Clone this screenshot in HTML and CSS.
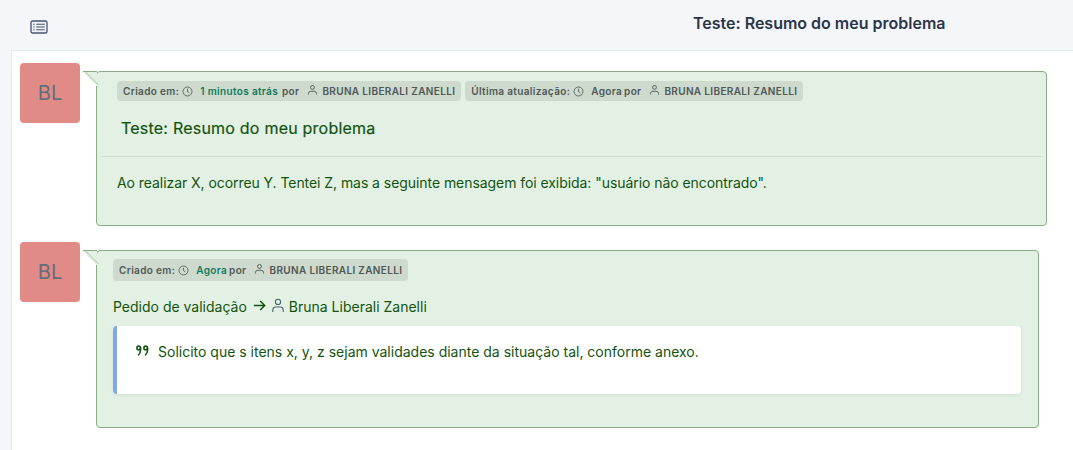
FILE: index.html
```html
<!DOCTYPE html>
<html lang="pt-BR">
<head>
<meta charset="utf-8">
<title>Teste: Resumo do meu problema</title>
<link rel="stylesheet" href="styles.css">
</head>
<body>
<header class="topbar">
  <button class="menu-btn" aria-label="Menu">
    <svg width="18" height="14" viewBox="0 0 18 14" fill="none" stroke="#47556e" stroke-width="1.1"><rect x="1" y="1" width="16" height="12" rx="1.6" fill="#eef1f7" stroke-width="1.3"/><path d="M3.2 4.2h1.4M3.2 7h1.4M3.2 9.8h1.4M6.2 4.2h8.6M6.2 7h8.6M6.2 9.8h8.6"/></svg>
  </button>
  <h1 class="page-title">Teste: Resumo do meu problema</h1>
</header>
<main class="content">
  <section class="entry entry-first">
    <div class="avatar">BL</div>
    <article class="card card-first">
      <div class="badges badges-first">
        <span class="badge">Criado em:
          <svg class="ico-clock" viewBox="0 0 12 12"><circle cx="6" cy="6" r="4.9"/><path d="M6 3v3.2l2 1.2"/></svg>
          <span class="time">1 minutos atrás</span> por
          <svg class="ico-user" viewBox="0 0 12 12"><circle cx="6" cy="3.2" r="2.1"/><path d="M1.6 11V9.8a2.6 2.6 0 0 1 2.6-2.4h3.6a2.6 2.6 0 0 1 2.6 2.4V11"/></svg>
          <span>BRUNA LIBERALI ZANELLI</span>
        </span>
        <span class="badge">Última atualização:
          <svg class="ico-clock" viewBox="0 0 12 12"><circle cx="6" cy="6" r="4.9"/><path d="M6 3v3.2l2 1.2"/></svg>
          <span class="time-plain">Agora</span> por
          <svg class="ico-user" viewBox="0 0 12 12"><circle cx="6" cy="3.2" r="2.1"/><path d="M1.6 11V9.8a2.6 2.6 0 0 1 2.6-2.4h3.6a2.6 2.6 0 0 1 2.6 2.4V11"/></svg>
          <span>BRUNA LIBERALI ZANELLI</span>
        </span>
      </div>
      <h2 class="card-title">Teste: Resumo do meu problema</h2>
      <hr class="divider">
      <p class="card-text">Ao realizar X, ocorreu Y. Tentei Z, mas a seguinte mensagem foi exibida: "usuário não encontrado".</p>
    </article>
  </section>
  <section class="entry entry-second">
    <div class="avatar">BL</div>
    <article class="card card-second">
      <div class="badges">
        <span class="badge badge-tall">Criado em:
          <svg class="ico-clock" viewBox="0 0 12 12"><circle cx="6" cy="6" r="4.9"/><path d="M6 3v3.2l2 1.2"/></svg>
          <span class="time time-short">Agora</span> por
          <svg class="ico-user" viewBox="0 0 12 12"><circle cx="6" cy="3.2" r="2.1"/><path d="M1.6 11V9.8a2.6 2.6 0 0 1 2.6-2.4h3.6a2.6 2.6 0 0 1 2.6 2.4V11"/></svg>
          <span>BRUNA LIBERALI ZANELLI</span>
        </span>
      </div>
      <p class="request">Pedido de validação
        <svg class="ico-arrow" viewBox="0 0 12 12"><path d="M.8 6h10M6.6 1.8 10.8 6l-4.2 4.2"/></svg>
        <svg class="ico-user-lg" viewBox="0 0 12 14"><circle cx="6" cy="3.4" r="2.6"/><path d="M.8 13.4v-2a3 3 0 0 1 3-2.9h4.4a3 3 0 0 1 3 2.9v2"/></svg>
        <span>Bruna Liberali Zanelli</span>
      </p>
      <blockquote class="quote">
        <svg class="ico-quote" viewBox="0 0 13 11"><circle cx="2.7" cy="2.9" r="1.8"/><path d="M4.5 2.9v2.4c0 2.2-.9 3.8-2.4 5"/><circle cx="9.7" cy="2.9" r="1.8"/><path d="M11.5 2.9v2.4c0 2.2-.9 3.8-2.4 5"/></svg>
        <span>Solicito que s itens x, y, z sejam validades diante da situação tal, conforme anexo.</span>
      </blockquote>
    </article>
  </section>
</main>
</body>
</html>
```
FILE: styles.css
```css
* { box-sizing: border-box; }
html, body { height: 100%; }
body {
  margin: 0;
  background: #f4f6fa;
  font-family: Inter, "Liberation Sans", sans-serif;
  color: #14530f;
  overflow: hidden;
}
.topbar {
  height: 50px;
  display: flex;
  align-items: center;
}
.menu-btn {
  margin-left: 30px;
  margin-top: 4px;
  padding: 0;
  border: 0;
  background: none;
  display: flex;
}
.page-title {
  margin: -4px 0 0 645px;
  font-size: 16px;
  font-weight: 600;
  line-height: 24px;
  color: #2a3547;
}
.content {
  margin-left: 11px;
  height: 400px;
  background: #fff;
  border-top: 1px solid #e4e7ec;
  border-left: 1px solid #e4e7ec;
  padding: 12px 0 0 8px;
}
.entry {
  display: flex;
  align-items: flex-start;
}
.entry-first { padding-right: 26px; }
.entry-second { margin-top: 16px; padding-right: 34px; }
.avatar {
  flex: none;
  width: 60px;
  height: 60px;
  border-radius: 4px;
  background: #e08b85;
  color: #636d7e;
  font-size: 20px;
  line-height: 60px;
  text-align: center;
}
.card {
  position: relative;
  flex: 1;
  margin: 8px 0 0 16px;
  background: #e2f1e3;
  border: 1px solid #87ad87;
  border-radius: 4px;
}
.card::before {
  content: "";
  position: absolute;
  left: -14px;
  top: -1px;
  width: 14px;
  height: 14px;
  background: linear-gradient(to top right, transparent 50%, #e2f1e3 50%);
  border-top: 1px solid #87ad87;
}
.card::after {
  content: "";
  position: absolute;
  left: -14px;
  top: 5.5px;
  width: 18px;
  height: 1px;
  background: #b6cfb7;
  transform: rotate(45deg);
}
.card-first { height: 155px; padding: 9px 4px 0 4px; }
.card-second { height: 178px; padding: 8px 17px 0 16px; }
.badges {
  display: flex;
  gap: 4px;
}
.badges-first { padding-left: 16px; }
.badge {
  display: inline-flex;
  align-items: center;
  height: 20px;
  padding: 0 6px;
  border-radius: 4px;
  background: #cddacd;
  color: #4f5757;
  font-size: 10px;
  font-weight: 600;
  letter-spacing: .35px;
  white-space: nowrap;
}
.badge-tall { height: 22px; }
.time { color: #0f7a5d; margin-right: 4px; }
.time-short { margin-right: 2px; }
.time-plain { margin-right: 2px; }
.ico-clock {
  flex: none;
  width: 11px;
  height: 11px;
  margin: 0 7px 0 3px;
  fill: none;
  stroke: #4f5757;
  stroke-width: .9;
}
.ico-user {
  flex: none;
  width: 11px;
  height: 12px;
  margin: -3px 4px 0 8px;
  fill: none;
  stroke: #4f5757;
  stroke-width: 1;
}
.card-title {
  margin: 17px 0 0 20px;
  font-size: 16px;
  font-weight: 400;
  letter-spacing: .22px;
  -webkit-text-stroke: .2px #14530f;
  line-height: 20px;
}
.divider {
  margin: 18px 0 0;
  border: 0;
  border-top: 1px solid #cfdfd0;
}
.card-text {
  margin: 16px 0 0 16px;
  font-size: 14px;
  letter-spacing: -.06px;
  line-height: 20px;
}
.request {
  display: flex;
  align-items: center;
  margin: 15px 0 0;
  font-size: 14px;
  line-height: 22px;
  white-space: nowrap;
}
.ico-arrow {
  flex: none;
  width: 13px;
  height: 13px;
  margin: -4px 4px 0 6px;
  fill: none;
  stroke: #14530f;
  stroke-width: 1.4;
}
.ico-user-lg {
  flex: none;
  width: 12px;
  height: 15px;
  margin: -3px 5px 0 2px;
  fill: none;
  stroke: #4e6470;
  stroke-width: 1.1;
}
.quote {
  display: flex;
  align-items: flex-start;
  height: 68px;
  margin: 8px 0 0;
  padding: 16px 0 0 18px;
  background: #fff;
  border-left: 4px solid #7ea9e6;
  border-radius: 4px;
  box-shadow: 0 1px 3px rgba(0, 0, 0, .08);
  font-size: 14px;
  line-height: 20px;
}
.ico-quote {
  flex: none;
  width: 13px;
  height: 11px;
  margin: 3px 9px 0 1px;
  fill: none;
  stroke: #14530f;
  stroke-width: 1.6;
}
```
